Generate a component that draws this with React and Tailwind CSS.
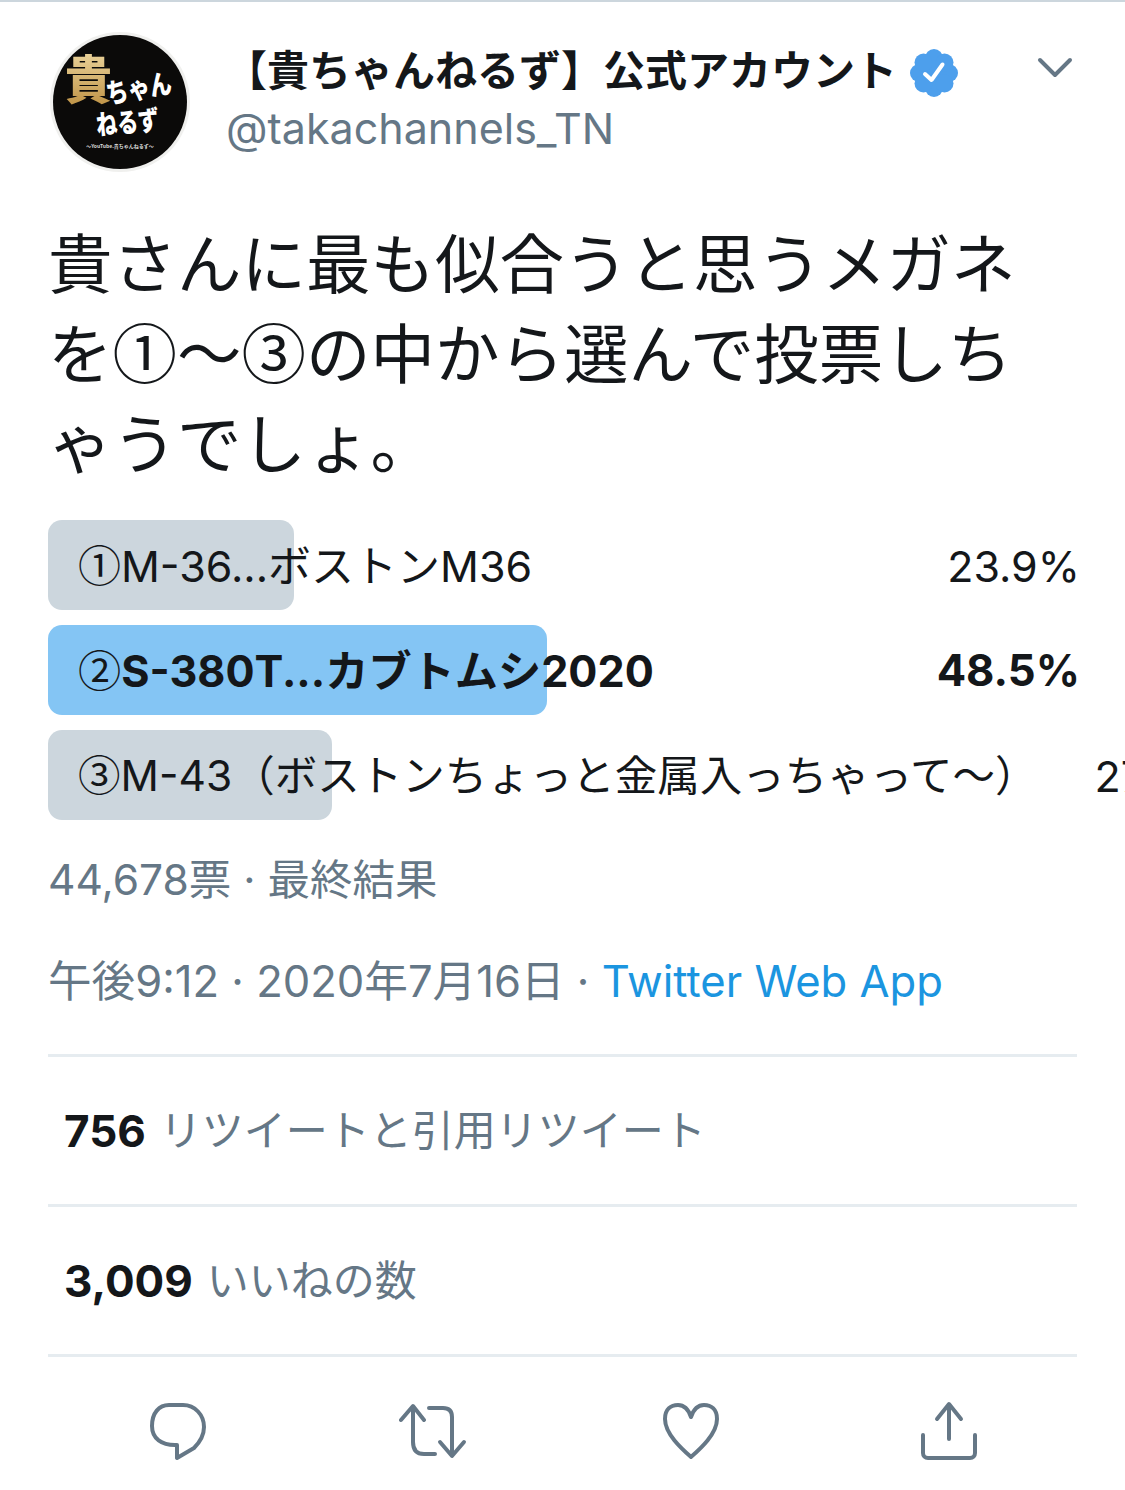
import React from 'react';

const latinStack = "font-['Inter','Noto_Sans_CJK_JP',sans-serif]";
const cjkOnly = "font-['Noto_Sans_CJK_JP',sans-serif]";

const Circled = ({ children }) => <span className={`${cjkOnly} font-normal leading-none`}>{children}</span>;

const pollOptions = [
  { id: 1, mark: '①', label: 'M-36...ボストンM36', percent: '23.9%', labelSize: 'text-[43px]', percentSize: 'text-[43px]', barWidth: 'w-[246px]', barColor: 'bg-[#ccd6dd]' },
  { id: 2, mark: '②', label: 'S-380T...カブトムシ2020', percent: '48.5%', labelSize: 'text-[43.2px]', percentSize: 'text-[43.6px]', barWidth: 'w-[499px]', barColor: 'bg-[#84c5f4]', winner: true },
  { id: 3, mark: '③', label: 'M-43（ボストンちょっと金属入っちゃって〜）', percent: '27.6%', labelSize: 'text-[42.5px]', percentSize: 'text-[43px] ml-[57px]', barWidth: 'w-[284px]', barColor: 'bg-[#ccd6dd]' },
];

const Avatar = () => (
  <svg viewBox="0 0 140 140" className="w-[140px] h-[140px] shrink-0">
    <defs>
      <linearGradient id="gold" x1="0" y1="0" x2="0" y2="1">
        <stop offset="0" stopColor="#f5e3b0" />
        <stop offset="1" stopColor="#b98a3a" />
      </linearGradient>
    </defs>
    <circle cx="70" cy="70" r="70" fill="#f0f0ee" />
    <circle cx="70" cy="70" r="67" fill="#0b0a09" />
    <text x="0" y="0" fontSize="47" fontWeight="900" fill="url(#gold)" fontFamily="'Noto Sans CJK JP',sans-serif" transform="translate(15 67) scale(1 1.12)">貴</text>
    <text x="0" y="0" fontSize="22" fontWeight="900" fill="#fff" fontFamily="'Noto Sans CJK JP',sans-serif" transform="translate(58 72) rotate(-10) scale(1 1.25)">ちゃん</text>
    <text x="0" y="0" fontSize="21" fontWeight="900" fill="#fff" fontFamily="'Noto Sans CJK JP',sans-serif" transform="translate(47 103) rotate(-5) scale(1 1.3)">ねるず</text>
    <text x="70" y="116" fontSize="5" fontWeight="700" fill="#ddd" textAnchor="middle" fontFamily="'Noto Sans CJK JP',sans-serif">〜YouTube.貴ちゃんねるず〜</text>
  </svg>
);

const Verified = () => (
  <svg viewBox="0 0 50 50" className="w-[50px] h-[50px] shrink-0">
    <g fill="#4d9fec">
      <circle cx="25" cy="25" r="17" />
      <circle cx="25" cy="10" r="9" />
      <circle cx="25" cy="40" r="9" />
      <circle cx="10" cy="25" r="9" />
      <circle cx="40" cy="25" r="9" />
      <circle cx="14.5" cy="14.5" r="9" />
      <circle cx="35.5" cy="14.5" r="9" />
      <circle cx="14.5" cy="35.5" r="9" />
      <circle cx="35.5" cy="35.5" r="9" />
    </g>
    <path d="M16 26 L22.5 32 L33.5 16.5" fill="none" stroke="#fff" strokeWidth="4" strokeLinecap="round" strokeLinejoin="round" />
  </svg>
);

const iconClass = 'w-[70px] h-[64px] fill-none stroke-[#657786] [stroke-linecap:round] [stroke-linejoin:round]';

const ReplyIcon = () => (
  <svg viewBox="0 0 70 64" className={iconClass} strokeWidth="4">
    <path d="M27 6 H41 C53 6 62 16 62 28 C62 37 58 43 52 49 L35 59 V46 H33 C20 46 10 40 10 27 C10 14 17 6 27 6 Z" />
  </svg>
);

const RetweetIcon = () => (
  <svg viewBox="0 0 70 64" className={iconClass} strokeWidth="4">
    <path d="M2 21 L14 7 L25 21 M14 8 V43 C14 51 18 55 25 55 H36" />
    <path d="M30 9 H44 C51 9 53 13 53 18 V55 M41 43 L53 57 L65 43" />
  </svg>
);

const HeartIcon = () => (
  <svg viewBox="0 0 70 64" className={iconClass} strokeWidth="4">
    <path d="M34 58 C25 50 8 35 8 20 C8 10 14 6 21 6 C28 6 32 12 34 18 C36 12 40 6 47 6 C54 6 60 10 60 20 C60 35 43 50 34 58 Z" />
  </svg>
);

const ShareIcon = () => (
  <svg viewBox="0 0 70 64" className={iconClass} strokeWidth="4">
    <path d="M35 40 V6 M23 20 L35 5 L47 20" />
    <path d="M9 36 V54 C9 57 11 59 14 59 H56 C59 59 61 57 61 54 V36" />
  </svg>
);

const Stat = ({ count, label }) => (
  <div className="h-[150px] border-b-[3px] border-[#e6ecf0] flex items-center px-4">
    <span className="text-[44px] font-bold text-[#14171a] mr-[14px]">{count}</span>
    <span className="text-[42px] text-[#657786]">{label}</span>
  </div>
);

export default function App() {
  return (
    <div className={`w-[1125px] h-[1490px] overflow-hidden bg-white border-t-2 border-[#ccd6dd] ${latinStack}`}>
      <div className="px-[48px]">
        {/* Header */}
        <div className="flex items-start pt-[30px] h-[186px]">
          <div className="ml-[2px]">
            <Avatar />
          </div>
          <div className="ml-[37px] flex-1">
            <div className="flex items-center h-[76px]">
              <span className="text-[42px] font-bold text-[#14171a] whitespace-nowrap -ml-[2px] pt-[1px]">【貴ちゃんねるず】公式アカウント</span>
              <span className="ml-[12px] mt-[5px]"><Verified /></span>
            </div>
            <div className="text-[43px] leading-[40px] text-[#657786] -ml-[1px]">@takachannels_TN</div>
          </div>
          <svg viewBox="0 0 36 24" className="w-[36px] h-[24px] mt-[24px] mr-[4px] fill-none stroke-[#657786]" strokeWidth="4" strokeLinecap="round" strokeLinejoin="round">
            <path d="M3 4 L18 19 L33 4" />
          </svg>
        </div>

        {/* Tweet body */}
        <div className="text-[64.5px] leading-[90px] text-[#14171a] pt-[32px] whitespace-nowrap">
          貴さんに最も似合うと思うメガネ<br />
          を<Circled>①</Circled>〜<Circled>③</Circled>の中から選んで投票しち<br />
          ゃうでしょ。
        </div>

        {/* Poll */}
        <div className="mt-[30px] flex flex-col gap-[15px]">
          {pollOptions.map((option) => (
            <div key={option.id} className="relative h-[90px] flex items-center justify-between whitespace-nowrap text-[#14171a]">
              <div className={`absolute left-0 top-0 h-full rounded-[14px] ${option.barWidth} ${option.barColor}`} />
              <span className={`relative pl-[30px] pt-[2px] shrink-0 ${option.labelSize} ${option.winner ? 'font-bold' : ''}`}>
                <Circled>{option.mark}</Circled>{option.label}
              </span>
              <span className={`relative pt-[2px] shrink-0 -mr-[3px] ${option.percentSize} ${option.winner ? 'font-bold' : ''}`}>{option.percent}</span>
            </div>
          ))}
        </div>

        <div className="mt-[28px] text-[42.5px] leading-[64px] text-[#657786]">44,678票 · 最終結果</div>

        <div className="mt-[38px] pb-[40px] text-[43.6px] leading-[64px] text-[#657786] border-b-[3px] border-[#e6ecf0]">
          午後9:12 · 2020年7月16日 · <span className="text-[#1b95e0]">Twitter Web App</span>
        </div>

        <Stat count="756" label="リツイートと引用リツイート" />
        <Stat count="3,009" label="いいねの数" />

        {/* Actions */}
        <div className="flex items-center justify-between pt-[42px] pl-[94px] pr-[93px]">
          <ReplyIcon />
          <RetweetIcon />
          <HeartIcon />
          <ShareIcon />
        </div>
      </div>
    </div>
  );
}
